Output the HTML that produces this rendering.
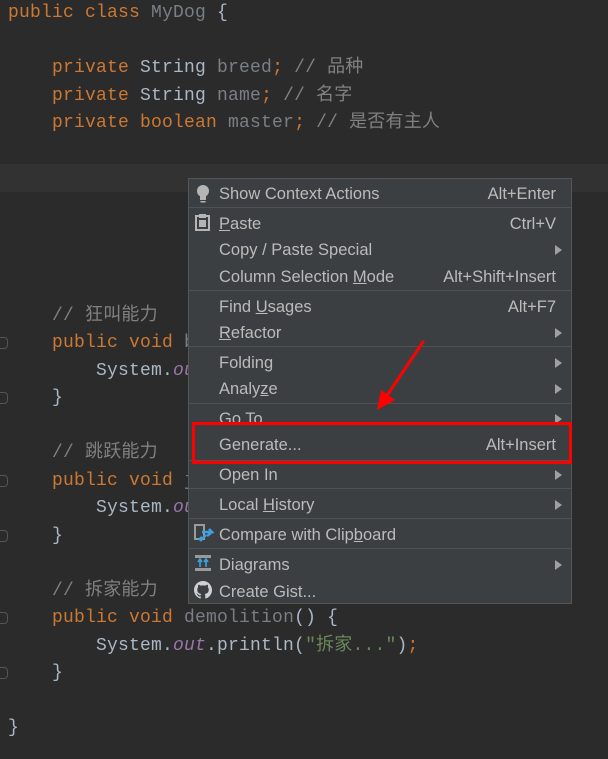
<!DOCTYPE html>
<html><head><meta charset="utf-8"><style>
*{margin:0;padding:0;box-sizing:border-box}
body{width:608px;height:759px;background:#2b2b2b;position:relative;overflow:hidden}
.c{position:absolute;left:8px;height:20px;line-height:20px;font-family:"Liberation Mono","Noto Sans CJK SC",monospace;font-size:18px;letter-spacing:0.2px;color:#a9b7c6;white-space:pre}
.k{color:#cc7832}.g{color:#808080}.f{color:#7a7e85}.p{color:#9876aa;font-style:italic}.s{color:#6a8759}
.hl{position:absolute;left:0;top:164px;width:608px;height:28px;background:#323232}
.menu{position:absolute;left:188px;top:178px;width:384px;height:426px;background:#3c3f41;border:1px solid #555}
.it{position:absolute;left:30px;right:15px;height:20px;line-height:20px;font-family:"Liberation Sans",sans-serif;font-size:16.5px;color:#bbbbbb;margin-top:1px}
.it .r{position:absolute;right:0;top:0}
.it .a{position:absolute;right:-6px;top:5px;width:0;height:0;border-left:7px solid #a0a0a0;border-top:5px solid transparent;border-bottom:5px solid transparent}
.sep{position:absolute;left:0;right:0;height:1px;background:#4f5254}
.u{text-decoration:underline}
.gut{position:absolute;left:0;width:8px;height:12px;border:1px solid #555;border-left:none;border-radius:0 4px 4px 0}
</style></head><body>
<div class="hl"></div>
<div class="c" style="top:3px"><span class="k">public class </span><span class="f">MyDog</span> {</div>
<div class="c" style="top:58px">    <span class="k">private </span>String <span class="f">breed</span><span class="k">;</span> <span class="g">// 品种</span></div>
<div class="c" style="top:86px">    <span class="k">private </span>String <span class="f">name</span><span class="k">;</span> <span class="g">// 名字</span></div>
<div class="c" style="top:113px">    <span class="k">private boolean </span><span class="f">master</span><span class="k">;</span> <span class="g">// 是否有主人</span></div>
<div class="c" style="top:306px">    <span class="g">// 狂叫能力</span></div>
<div class="c" style="top:333px">    <span class="k">public void </span><span class="f">bark</span></div>
<div class="c" style="top:361px">        System.<span class="p">out</span></div>
<div class="c" style="top:388px">    }</div>
<div class="c" style="top:443px">    <span class="g">// 跳跃能力</span></div>
<div class="c" style="top:471px">    <span class="k">public void </span><span class="f">jump</span></div>
<div class="c" style="top:498px">        System.<span class="p">out</span></div>
<div class="c" style="top:526px">    }</div>
<div class="c" style="top:581px">    <span class="g">// 拆家能力</span></div>
<div class="c" style="top:608px">    <span class="k">public void </span><span class="f">demolition</span>() {</div>
<div class="c" style="top:636px">        System.<span class="p">out</span>.println(<span class="s">"拆家..."</span>)<span class="k">;</span></div>
<div class="c" style="top:663px">    }</div>
<div class="c" style="top:718px">}</div>
<div class="gut" style="top:337px"></div><div class="gut" style="top:392px"></div>
<div class="gut" style="top:475px"></div><div class="gut" style="top:530px"></div>
<div class="gut" style="top:612px"></div><div class="gut" style="top:667px"></div>

<div class="menu">
<svg style="position:absolute;left:6px;top:5px" width="16" height="20" viewBox="0 0 16 20"><circle cx="8" cy="7" r="6" fill="#b5b5b5"/><rect x="5" y="12" width="6" height="4" fill="#b5b5b5"/><rect x="5.5" y="17" width="5" height="1.5" fill="#b5b5b5"/></svg>
<div class="it" style="top:4px">Show Context Actions<span class="r">Alt+Enter</span></div>
<div class="sep" style="top:28px"></div>
<svg style="position:absolute;left:6px;top:35px" width="15" height="17" viewBox="0 0 15 17"><rect x="1" y="2" width="13" height="14" fill="none" stroke="#b5b5b5" stroke-width="2"/><rect x="4" y="0" width="7" height="4" fill="#b5b5b5"/><rect x="4" y="6" width="7" height="7" fill="#b5b5b5"/></svg>
<div class="it" style="top:34px"><span class="u">P</span>aste<span class="r">Ctrl+V</span></div>
<div class="it" style="top:60px">Copy / Paste Special<span class="a"></span></div>
<div class="it" style="top:87px">Column Selection <span class="u">M</span>ode<span class="r">Alt+Shift+Insert</span></div>
<div class="sep" style="top:111px"></div>
<div class="it" style="top:117px">Find <span class="u">U</span>sages<span class="r">Alt+F7</span></div>
<div class="it" style="top:143px"><span class="u">R</span>efactor<span class="a"></span></div>
<div class="sep" style="top:167px"></div>
<div class="it" style="top:173px">Folding<span class="a"></span></div>
<div class="it" style="top:199px">Analy<span class="u">z</span>e<span class="a"></span></div>
<div class="sep" style="top:224px"></div>
<div class="it" style="top:229px">Go To<span class="a"></span></div>
<div class="it" style="top:255px">Generate...<span class="r">Alt+Insert</span></div>
<div class="sep" style="top:281px"></div>
<div class="it" style="top:285px">Open In<span class="a"></span></div>
<div class="sep" style="top:309px"></div>
<div class="it" style="top:315px">Local <span class="u">H</span>istory<span class="a"></span></div>
<div class="sep" style="top:339px"></div>
<svg style="position:absolute;left:5px;top:344px" width="20" height="20" viewBox="0 0 20 20"><rect x="1" y="2" width="9" height="14" fill="none" stroke="#9a9a9a" stroke-width="2"/><path d="M8 9 L18 9 L15 6 M8 14 L5 17 M18 9 L13 13" stroke="#3d9fe0" stroke-width="2.5" fill="none"/><path d="M6 18 L12 12" stroke="#3d9fe0" stroke-width="2.5"/></svg>
<div class="it" style="top:345px">Compare with Clip<span class="u">b</span>oard</div>
<div class="sep" style="top:369px"></div>
<svg style="position:absolute;left:5px;top:375px" width="18" height="18" viewBox="0 0 18 18"><rect x="1" y="1" width="16" height="3" fill="#9a9a9a"/><rect x="1" y="14" width="16" height="3" fill="#9a9a9a"/><path d="M6 13 V6 M4 8 L6 5 L8 8 M12 13 V6 M10 8 L12 5 L14 8" stroke="#3d9fe0" stroke-width="1.6" fill="none"/></svg>
<div class="it" style="top:375px">Diagrams<span class="a"></span></div>
<svg style="position:absolute;left:5px;top:402px" width="18" height="18" viewBox="0 0 16 16"><path fill="#d0d0d0" d="M8 0C3.58 0 0 3.58 0 8c0 3.54 2.29 6.530 5.47 7.59.4.07.55-.17.55-.38 0-.19-.01-.82-.01-1.490-2.01.37-2.530-.49-2.690-.94-.09-.23-.48-.94-.82-1.13-.28-.15-.68-.52-.01-.53.63-.01 1.080.58 1.230.82.72 1.210 1.870.87 2.330.66.07-.52.28-.87.51-1.07-1.78-.2-3.640-.89-3.640-3.950 0-.87.31-1.590.82-2.150-.08-.2-.36-1.020.08-2.120 0 0 .67-.21 2.200.82.64-.18 1.320-.27 2-.27.68 0 1.360.09 2 .27 1.530-1.040 2.200-.82 2.200-.82.44 1.100.16 1.920.08 2.120.51.56.82 1.270.82 2.150 0 3.070-1.870 3.750-3.650 3.950.29.25.54.73.54 1.480 0 1.070-.01 1.930-.01 2.200 0 .21.15.46.55.38A8.013 8.013 0 0016 8c0-4.420-3.580-8-8-8z"/></svg>
<div class="it" style="top:402px">Create Gist...</div>
</div>
<div style="position:absolute;left:192px;top:422px;width:380px;height:42px;border:3px solid #ff0000"></div>
<svg style="position:absolute;left:0;top:0" width="608" height="759"><line x1="423" y1="342" x2="386" y2="397" stroke="#ff0000" stroke-width="3" stroke-linecap="round"/><polygon points="377,410 381,390 395,400" fill="#ff0000"/></svg>
</body></html>
